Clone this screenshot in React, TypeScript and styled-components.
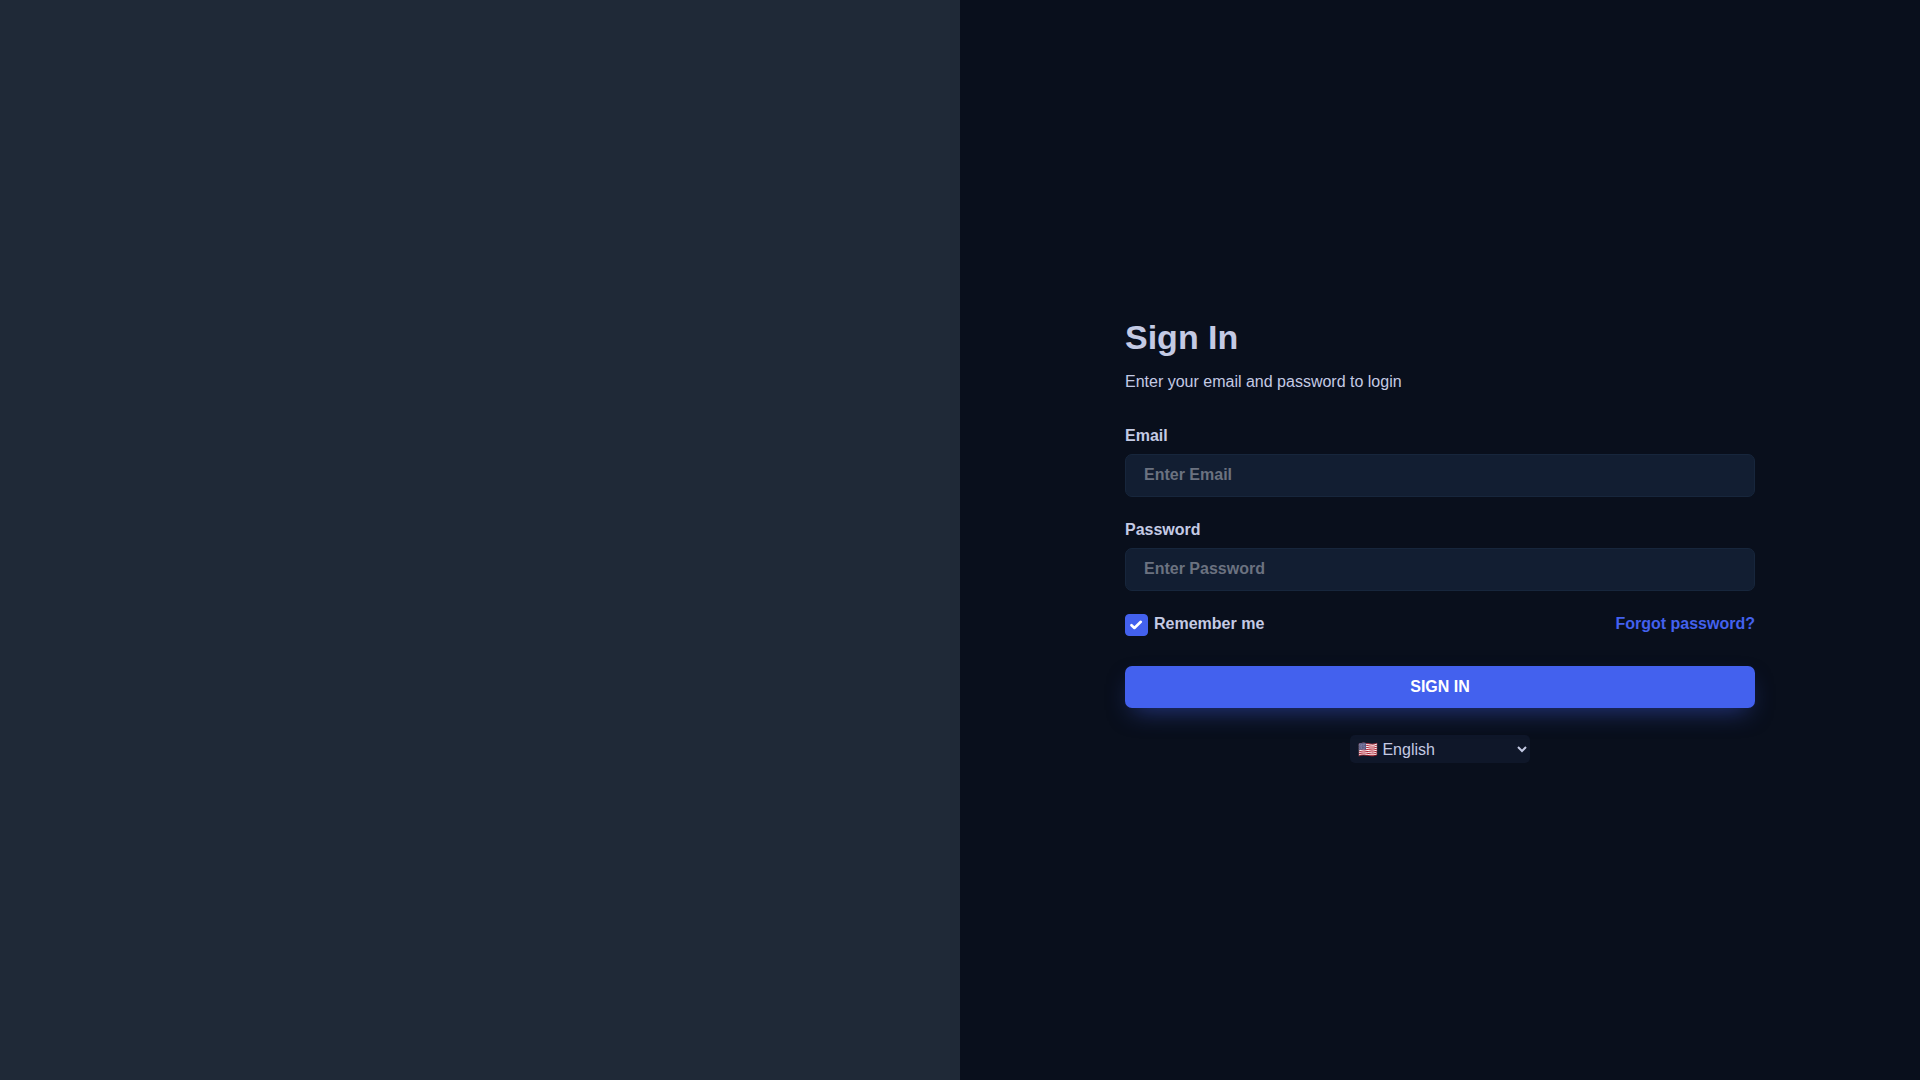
import React, { useState } from "react";
import styled, { createGlobalStyle } from "styled-components";

const GlobalStyle = createGlobalStyle`
  *, *::before, *::after { box-sizing: border-box; }
  body {
    margin: 0;
    background: #090f1c;
    color: #c4cae4;
    font-family: "Liberation Sans", Arial, sans-serif;
    font-size: 16px;
    line-height: 24px;
  }
`;

const Page = styled.main`
  display: grid;
  grid-template-columns: 1fr 1fr;
  min-height: 100vh;
`;

const Cover = styled.div`
  background: #1f2937;
`;

const Panel = styled.section`
  display: flex;
  flex-direction: column;
  align-items: center;
  justify-content: center;
  padding: 24px;
`;

const Content = styled.div`
  width: 100%;
  max-width: 630px;
`;

const Title = styled.h1`
  margin: 0 0 14px;
  font-size: 34px;
  line-height: 38px;
  font-weight: 700;
`;

const Subtitle = styled.p`
  margin: 0 0 30px;
`;

const Form = styled.form`
  display: flex;
  flex-direction: column;
`;

const Field = styled.div`
  display: flex;
  flex-direction: column;
  gap: 6px;
  margin-bottom: 21px;
`;

const Label = styled.label`
  font-weight: 700;
`;

const TextInput = styled.input`
  width: 100%;
  height: 43px;
  padding: 9px 18px;
  border: 1px solid #17263c;
  border-radius: 7px;
  background: #121e32;
  color: #c4cae4;
  font: inherit;
  font-weight: 700;
  outline: none;

  &::placeholder { color: #6b7280; opacity: 1; }
  &:focus { border-color: #4361ee; }
`;

const Options = styled.div`
  display: flex;
  align-items: center;
  justify-content: space-between;
  margin-bottom: 30px;
  font-weight: 700;
`;

const Remember = styled.label`
  display: flex;
  align-items: flex-end;
  gap: 6px;
  cursor: pointer;
`;

const CheckWrap = styled.span`
  display: grid;
  width: 23px;
  height: 22px;

  & > * { grid-area: 1 / 1; }
  & > svg { place-self: center; pointer-events: none; }
`;

const CheckInput = styled.input`
  appearance: none;
  width: 100%;
  height: 100%;
  margin: 0;
  border: 1px solid #253b5c;
  border-radius: 4px;
  background: transparent;
  cursor: pointer;

  &:checked { background: #4361ee; border-color: #4361ee; }
`;

const ForgotLink = styled.a`
  color: #4361ee;
  text-decoration: none;
`;

const SubmitButton = styled.button`
  height: 42px;
  margin-bottom: 27px;
  padding: 9px 20px;
  border: 0;
  border-radius: 7px;
  background: #4361ee;
  box-shadow: 0 10px 24px -8px rgba(67, 97, 238, 0.5);
  color: #fff;
  font: inherit;
  font-weight: 700;
  text-transform: uppercase;
  cursor: pointer;
`;

const LanguageSelect = styled.select`
  display: block;
  width: 180px;
  height: 28px;
  margin: 0 auto;
  padding: 1px 0 0 4px;
  border: 0;
  border-radius: 5px;
  background: #0f1729;
  color: #c4cae4;
  font: inherit;
`;

export default function App() {
  const [remember, setRemember] = useState(true);

  return (
    <>
      <GlobalStyle />
      <Page>
        <Cover />
        <Panel>
          <Content>
            <Title>Sign In</Title>
            <Subtitle>Enter your email and password to login</Subtitle>
            <Form onSubmit={(e) => e.preventDefault()}>
              <Field>
                <Label htmlFor="email">Email</Label>
                <TextInput id="email" type="email" placeholder="Enter Email" />
              </Field>
              <Field>
                <Label htmlFor="password">Password</Label>
                <TextInput id="password" type="password" placeholder="Enter Password" />
              </Field>
              <Options>
                <Remember htmlFor="remember">
                  <CheckWrap>
                    <CheckInput
                      id="remember"
                      type="checkbox"
                      checked={remember}
                      onChange={(e) => setRemember(e.target.checked)}
                    />
                    {remember && (
                      <svg width="13" height="10" viewBox="0 0 13 10" fill="none" aria-hidden="true">
                        <path
                          d="M1.5 5.2 L4.4 8 L10.8 1.8"
                          stroke="#fff"
                          strokeWidth="2.6"
                          strokeLinecap="round"
                          strokeLinejoin="round"
                        />
                      </svg>
                    )}
                  </CheckWrap>
                  <span>Remember me</span>
                </Remember>
                <ForgotLink href="#forgot">Forgot password?</ForgotLink>
              </Options>
              <SubmitButton type="submit">Sign in</SubmitButton>
            </Form>
            <LanguageSelect aria-label="Language" defaultValue="en">
              <option value="en">🇺🇸 English</option>
            </LanguageSelect>
          </Content>
        </Panel>
      </Page>
    </>
  );
}
